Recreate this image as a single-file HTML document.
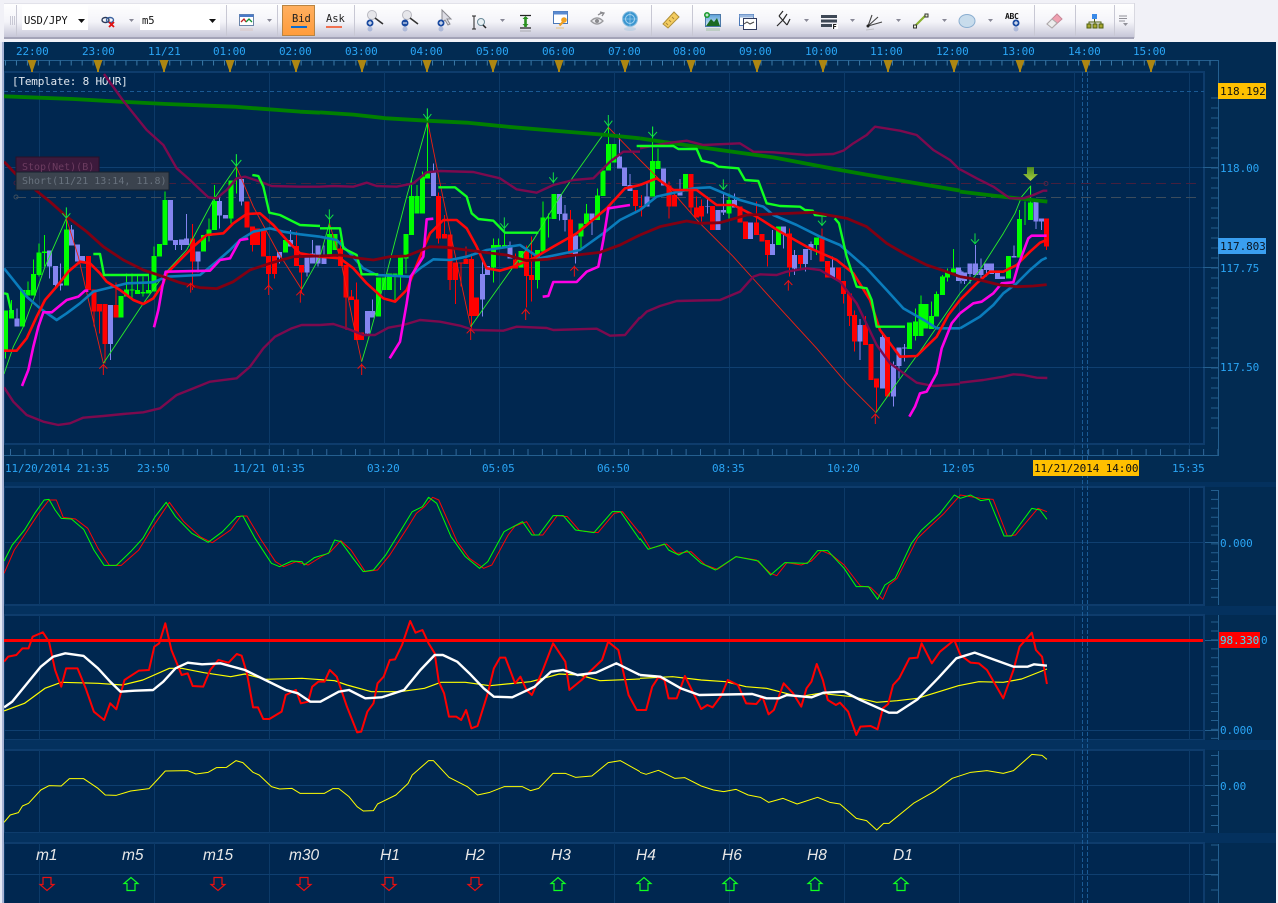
<!DOCTYPE html>
<html><head><meta charset="utf-8"><title>USD/JPY m5</title>
<style>
html,body{margin:0;padding:0;background:#f1f1f7;width:1278px;height:903px;overflow:hidden}
svg{display:block;position:absolute;left:0;top:0}
text{font-family:"DejaVu Sans Mono","Liberation Mono",monospace;font-size:11px;letter-spacing:-.1px}
.c path{fill:none;vector-effect:non-scaling-stroke;stroke-linejoin:round}
.w path{stroke-width:1;shape-rendering:crispEdges}
.b path{stroke-width:5;shape-rendering:crispEdges}
.g{stroke:#00ff00}.r{stroke:#ff0000}.v{stroke:#8484f0}
.bb{stroke:#7c0a4e;stroke-width:2.4}.mid{stroke:#820012;stroke-width:2.8}.ma{stroke:#0a7cbc;stroke-width:2.6}
.rd{stroke:#ff0808;stroke-width:2.6}.mg{stroke:#ff00e6;stroke-width:2.6}.sg{stroke:#10ff20;stroke-width:2.4}
.dg{stroke:#008000;stroke-width:3.800}.tg{stroke:#28f028;stroke-width:.9}.tr{stroke:#f02010;stroke-width:.9}
.ag{stroke:#10e040;stroke-width:1}.ar{stroke:#f01010;stroke-width:1}
.tl{fill:#2aa5f5}
.it{font-family:"Liberation Sans",sans-serif;font-style:italic;font-size:15.5px;fill:#e8e8e8;letter-spacing:0}
</style></head>
<body>
<svg width="1278" height="903" viewBox="0 0 1278 903" xmlns="http://www.w3.org/2000/svg">
<defs>
<linearGradient id="tb" x1="0" y1="0" x2="0" y2="1"><stop offset="0" stop-color="#ffffff"/><stop offset=".55" stop-color="#f4f4f9"/><stop offset="1" stop-color="#c6c6d8"/></linearGradient>
<linearGradient id="orb" x1="0" y1="0" x2="0" y2="1"><stop offset="0" stop-color="#e6eef8"/><stop offset="1" stop-color="#8fb4d8"/></linearGradient>
<linearGradient id="bar" x1="0" y1="0" x2="0" y2="1"><stop offset="0" stop-color="#4d8a20"/><stop offset="1" stop-color="#a8d040"/></linearGradient>
<linearGradient id="or" x1="0" y1="0" x2="0" y2="1"><stop offset="0" stop-color="#ffb060"/><stop offset="1" stop-color="#ff9c3c"/></linearGradient>
<linearGradient id="sky" x1="0" y1="0" x2="0" y2="1"><stop offset="0" stop-color="#5aa0d8"/><stop offset="1" stop-color="#d8ecf8"/></linearGradient>
</defs>
<rect x="0" y="0" width="1278" height="42" fill="#f1f1f7"/>
<rect x="4" y="3" width="1130" height="34" fill="url(#tb)"/>
<rect x="4" y="37" width="1130" height="2" fill="#a4a4b8"/>
<rect x="4" y="3" width="1130" height="1" fill="#e2e2ea"/>
<rect x="1134" y="3" width="1" height="35" fill="#d8d8e0"/>
<g fill="#c8c8d4">
<rect x="16" y="5" width="1" height="31"/><rect x="226" y="5" width="1" height="31"/><rect x="277" y="5" width="1" height="31"/><rect x="354" y="5" width="1" height="31"/><rect x="651" y="5" width="1" height="31"/><rect x="692" y="5" width="1" height="31"/><rect x="1034" y="5" width="1" height="31"/><rect x="1075" y="5" width="1" height="31"/><rect x="1114" y="5" width="1" height="31"/>
<rect x="10" y="16" width="1" height="9"/><rect x="12" y="16" width="1" height="9"/><rect x="14" y="16" width="1" height="9"/>
</g>
<rect x="22" y="5" width="66" height="25" fill="#fff"/><rect x="140" y="5" width="80" height="25" fill="#fff"/>
<text x="24" y="24" fill="#111" style="font-size:10.5px">USD/JPY</text>
<text x="142" y="24" fill="#111" style="font-size:10.5px">m5</text>
<path d="M78 19h7l-3.500 4z M209 19h7l-3.500 4z" fill="#111"/>
<rect x="282.500" y="5.500" width="32" height="30" fill="url(#or)" stroke="#b88442"/>
<text x="292" y="22" fill="#222" style="font-size:10.5px">Bid</text><rect x="291" y="26" width="16" height="2" fill="#0a6ad0"/>
<text x="326" y="22" fill="#222" style="font-size:10.5px">Ask</text><rect x="326" y="26" width="16" height="2" fill="#f07050"/>
<!-- dropdown arrows -->
<path d="M129 19h5l-2.500 3z M267 19h5l-2.500 3z M500 19h5l-2.500 3z M804 19h5l-2.500 3z M850 19h5l-2.500 3z M896 19h5l-2.500 3z M942 19h5l-2.500 3z M988 19h5l-2.500 3z" fill="#888896"/>
<!-- link icon -->
<g fill="none" stroke-width="1.400"><ellipse cx="105.500" cy="20" rx="3.500" ry="2.500" stroke="#2a3a5a"/><ellipse cx="110" cy="20" rx="3.500" ry="2.500" stroke="#3a62a0"/></g><path d="M109 22l5 5M114 22l-5 5" stroke="#e01010" stroke-width="1.800"/>
<!-- chart window -->
<rect x="239.500" y="14.500" width="14" height="11" fill="#fff" stroke="#6a84a8"/><rect x="239.500" y="14.500" width="14" height="2.500" fill="#4a7ac8"/><path d="M241 22l3-3 2 3" fill="none" stroke="#c02020" stroke-width="1.300"/><path d="M246 22l3-3 3 3" fill="none" stroke="#109030" stroke-width="1.300"/><rect x="240" y="28" width="13" height="3" fill="#d8c8c8" opacity=".6"/>
<!-- magnifiers -->
<g><circle cx="372" cy="15" r="4.500" fill="#e6e6ea" stroke="#b8b8c0"/><circle cx="407" cy="15" r="4.500" fill="#e6e6ea" stroke="#b8b8c0"/><path d="M375 18l8 6M410 18l8 6" stroke="#333" stroke-width="1.600"/></g>
<path d="M442 10v13l3-3 3 5 2-1-3-5h4z" fill="#dcdce4" stroke="#8a8a90"/>
<circle cx="370" cy="23" r="3.500" fill="#1a4aa0"/><circle cx="405" cy="23" r="3.500" fill="#1a4aa0"/><circle cx="441" cy="23" r="3.500" fill="#1a4aa0"/><path d="M368 23h4M370 21v4M403 23h4M439 23h4M441 21v4" stroke="#fff"/>
<g opacity=".35"><circle cx="370" cy="29" r="2.500" fill="#5a7ac0"/><circle cx="405" cy="29" r="2.500" fill="#5a7ac0"/><circle cx="441" cy="29" r="2.500" fill="#5a7ac0"/></g>
<g fill="none" stroke="#222"><path d="M474 16v13M472 16h4M472 29h4"/><circle cx="481" cy="22" r="3.500" stroke="#6a8a98" fill="#e8f0f4"/><path d="M483 25l3 3" stroke-width="1.500"/></g>
<path d="M520 15.500h11M520 28h11" stroke="#222" stroke-width="1.300"/><path d="M525.500 17v10" stroke="#2a9020" stroke-width="2.600"/><path d="M522.500 19l3-3 3 3M522.500 24l3 3 3-3" fill="#2a9020"/><rect x="520" y="30" width="11" height="2" fill="#b0b0b8" opacity=".6"/>
<rect x="553.500" y="11.500" width="14" height="12" fill="#fff" stroke="#4a78b8"/><rect x="553.500" y="11.500" width="14" height="3" fill="#5a8ad0"/><circle cx="564" cy="20" r="2.800" fill="#f0a020"/><path d="M563 22l-3.500 3.500" stroke="#f0a020" stroke-width="2.200"/><path d="M556 28h8" stroke="#e8c890" stroke-width="2" opacity=".6"/>
<path d="M591 21q6-6 12 0q-6 6-12 0z" fill="#e8e8ec" stroke="#9a9a9e" stroke-width="1.300"/><circle cx="597" cy="21" r="2" fill="#8a8a8e"/><path d="M598 15q3-2 5-2M600 12l4 1-2 3" stroke="#8a8a8e" stroke-width="1.300" fill="none"/>
<circle cx="630" cy="19" r="7.500" fill="#3a96d0" stroke="#90c0e0"/><circle cx="630" cy="19" r="4.500" fill="none" stroke="#a8d4f0"/><path d="M630 12v14M623 19h14" stroke="#a8d4f0" stroke-width=".6"/><ellipse cx="630" cy="29" rx="6" ry="2" fill="#a8c8e0" opacity=".5"/>
<!-- ruler -->
<path d="M663 24l11-12 5 5-11 11z" fill="#f4cc60" stroke="#b09038"/><path d="M666 23l2 2M669 20l2 2M672 17l2 2" stroke="#a88838"/>
<!-- picture -->
<rect x="705.500" y="14.500" width="15" height="12" fill="url(#sky)" stroke="#4a78a8"/><path d="M706 26l5-7 3 3 3-4 3 8z" fill="#1a6a20"/><rect x="706" y="28" width="14" height="3" fill="#a0c0a0" opacity=".5"/><circle cx="707" cy="15" r="3" fill="#1a9a30"/><path d="M705.500 15h3M707 13.500v3" stroke="#fff"/>
<!-- window -->
<rect x="739.500" y="14.500" width="14" height="11" fill="#fff" stroke="#4a78b8"/><rect x="739.500" y="14.500" width="14" height="3" fill="#9ab8e0"/><rect x="743.500" y="18.500" width="13" height="11" fill="#fff" stroke="#303c60"/><path d="M744 24l3-2 3 2 4-2" stroke="#444" fill="none"/>
<!-- fork -->
<path d="M777 26l6-6M779 16l8 9M779 16l4-5M783 20l4-6M787 25l3-6" fill="none" stroke="#2a2a2a" stroke-width="1.200"/>
<!-- list -->
<g fill="#3e4856"><rect x="821" y="15" width="16" height="3"/><rect x="821" y="19.500" width="16" height="3"/><rect x="821" y="24" width="11" height="3"/></g><rect x="832" y="24" width="6" height="5" fill="#fff"/><text x="832.500" y="29" fill="#000" style="font-size:7px;font-weight:bold;letter-spacing:0">F</text>
<!-- fan -->
<path d="M868 26l4-11M868 26l10-9M868 26l14-4" fill="none" stroke="#444" stroke-width="1.100"/><circle cx="868" cy="26" r="1.500" fill="#222"/><path d="M866 30l8-1" stroke="#aaa" opacity=".6"/>
<!-- line -->
<path d="M915 26l11-11" stroke="#8ab030" stroke-width="2.200"/><rect x="913.500" y="25" width="3" height="3" fill="#e8f0d0" stroke="#333"/><rect x="925" y="14" width="3" height="3" fill="#e8f0d0" stroke="#333"/>
<!-- ellipse -->
<ellipse cx="967" cy="21" rx="8" ry="6.500" fill="#c8dcec" stroke="#8aaed0"/>
<!-- ABC -->
<text x="1005" y="19" fill="#111" style="font-size:8px;font-weight:bold;letter-spacing:-.3px">ABC</text><circle cx="1016" cy="23" r="3.500" fill="#1a4aa0"/><path d="M1014 23h4M1016 21v4" stroke="#fff"/><circle cx="1016" cy="29" r="2.500" fill="#5a7ac0" opacity=".35"/>
<!-- eraser -->
<path d="M1047 24l10-10 5 5-10 9z" fill="#f0a0b0" stroke="#c88898"/><path d="M1047 24l5-5 5 4-5 5z" fill="#ececec" stroke="#aaa"/>
<!-- tree -->
<rect x="1092" y="14" width="5" height="5" fill="#3a8ae8"/><path d="M1094.500 19v3M1089 24v-2h12v2M1095 22v2" fill="none" stroke="#506010"/><g fill="#a8a830" stroke="#506010"><rect x="1087" y="24" width="4" height="4"/><rect x="1093" y="24" width="4" height="4"/><rect x="1099" y="24" width="4" height="4"/></g>
<!-- grey list -->
<path d="M1119 16h8M1119 18.500h8M1119 21h6" stroke="#909098" stroke-width="1.100"/><path d="M1123 23h5l-2.500 3z" fill="#909098"/>

<!-- dark body -->
<rect x="4" y="42" width="1272" height="861" fill="#022b52"/>
<rect x="4" y="72" width="1200" height="372" fill="#002750" stroke="#0e3c6c" stroke-width="2"/>
<rect x="4" y="482" width="1272" height="5" fill="#04315e"/>
<rect x="4" y="487" width="1200" height="118" fill="#002750" stroke="#0e3c6c" stroke-width="2"/>
<rect x="4" y="606" width="1272" height="9" fill="#04315e"/>
<rect x="4" y="615" width="1200" height="125" fill="#002750" stroke="#0e3c6c" stroke-width="2"/>
<rect x="4" y="740" width="1272" height="10" fill="#04315e"/>
<rect x="4" y="750" width="1200" height="83" fill="#002750" stroke="#0e3c6c" stroke-width="2"/>
<rect x="4" y="833" width="1272" height="10" fill="#04315e"/>
<rect x="4" y="843" width="1200" height="62" fill="#002750" stroke="#0e3c6c" stroke-width="2"/>

<!-- grid -->
<path d="M39.500 72V443M154.500 72V443M269.500 72V443M384.500 72V443M499.500 72V443M614.500 72V443M729.500 72V443M844.500 72V443M959.500 72V443M1074.500 72V455M1189.500 72V455M269.500 443V455M39.500 487V605M154.500 487V605M269.500 487V605M384.500 487V605M499.500 487V605M614.500 487V605M729.500 487V605M844.500 487V605M959.500 487V605M1074.500 487V605M1189.500 487V605M39.500 615V740M154.500 615V740M269.500 615V740M384.500 615V740M499.500 615V740M614.500 615V740M729.500 615V740M844.500 615V740M959.500 615V740M1074.500 615V740M1189.500 615V740M39.500 750V833M154.500 750V833M269.500 750V833M384.500 750V833M499.500 750V833M614.500 750V833M729.500 750V833M844.500 750V833M959.500 750V833M1074.500 750V833M1189.500 750V833M39.500 843V903M154.500 843V903M269.500 843V903M384.500 843V903M499.500 843V903M614.500 843V903M729.500 843V903M844.500 843V903M959.500 843V903M1074.500 843V903M1189.500 843V903" stroke="#0c3a68" fill="none"/>
<path d="M4 167.500H1204M4 267.500H1204M4 367.500H1204M4 542.500H1204M4 730.500H1204M4 785.500H1204M4 874.500H1204" stroke="#0f3f70" fill="none"/>
<path d="M1082.500 72V903M1087.500 72V903" stroke="#1a5a94" stroke-dasharray="4 2" fill="none"/>
<path d="M4 91.500H1204" stroke="#1a5a94" stroke-dasharray="4 3" fill="none"/>
<path d="M16 183.500H1200" stroke="#45203e" stroke-dasharray="10 5" fill="none"/>
<path d="M16 197.500H1200" stroke="#3c4c5c" stroke-dasharray="10 5" fill="none"/>
<circle cx="16" cy="183" r="2" fill="none" stroke="#45203e"/><circle cx="16" cy="197" r="2" fill="none" stroke="#3c4c5c"/><circle cx="1046" cy="183.500" r="2" fill="none" stroke="#5a2444"/>

<!-- rulers & axes -->
<path d="M4 60.500H1218.500V455.500H4" stroke="#245f8f" fill="none"/>
<path d="M5 63H1218" stroke="#3a7aa8" stroke-width="5" stroke-dasharray="1 9.950" fill="none"/>
<path d="M10 452H1218" stroke="#30689a" stroke-width="6" stroke-dasharray="1 13.375" fill="none"/>
<path d="M1214.500 97.500V436" stroke="#245f8f" stroke-width="7" stroke-dasharray="1 9" fill="none"/>
<path d="M1203 167.500H1218M1203 267.500H1218M1203 367.500H1218" stroke="#245f8f" fill="none"/>
<path d="M1218.500 490V605M1218.500 615V740M1218.500 751V833M1218.500 844V903" stroke="#245f8f" fill="none"/>
<path d="M1214.500 490V605" stroke="#245f8f" stroke-width="7" stroke-dasharray="1 7.900" fill="none"/>
<path d="M1214.500 621.500V740" stroke="#245f8f" stroke-width="7" stroke-dasharray="1 7.950" fill="none"/>
<path d="M1214.500 755V833" stroke="#245f8f" stroke-width="7" stroke-dasharray="1 9" fill="none"/>
<path d="M1214.500 844.500V903" stroke="#245f8f" stroke-width="7" stroke-dasharray="1 14" fill="none"/>
<path d="M1205 542.500H1218M1205 640.500H1218M1205 730.500H1218M1205 785.500H1218M1205 874.500H1218" stroke="#245f8f" fill="none"/>
<!-- gold triangles -->
<path id="tri" d="M27.500 60h9l-3.500 10v2h-2v-2z M93.500 60h9l-3.500 10v2h-2v-2z M159.500 60h9l-3.500 10v2h-2v-2z M225.500 60h9l-3.500 10v2h-2v-2z M291.500 60h9l-3.500 10v2h-2v-2z M357.500 60h9l-3.500 10v2h-2v-2z M422.500 60h9l-3.500 10v2h-2v-2z M488.500 60h9l-3.500 10v2h-2v-2z M554.500 60h9l-3.500 10v2h-2v-2z M620.500 60h9l-3.500 10v2h-2v-2z M686.500 60h9l-3.500 10v2h-2v-2z M752.500 60h9l-3.500 10v2h-2v-2z M818.500 60h9l-3.500 10v2h-2v-2z M883.500 60h9l-3.500 10v2h-2v-2z M949.500 60h9l-3.500 10v2h-2v-2z M1015.500 60h9l-3.500 10v2h-2v-2z M1081.500 60h9l-3.500 10v2h-2v-2z M1146.500 60h9l-3.500 10v2h-2v-2z" fill="#ad8612"/>
<g class="tl">
<text x="16" y="55">22:00</text><text x="82" y="55">23:00</text><text x="148" y="55">11/21</text><text x="213" y="55">01:00</text><text x="279" y="55">02:00</text><text x="345" y="55">03:00</text><text x="410" y="55">04:00</text><text x="476" y="55">05:00</text><text x="542" y="55">06:00</text><text x="608" y="55">07:00</text><text x="673" y="55">08:00</text><text x="739" y="55">09:00</text><text x="805" y="55">10:00</text><text x="870" y="55">11:00</text><text x="936" y="55">12:00</text><text x="1002" y="55">13:00</text><text x="1068" y="55">14:00</text><text x="1133" y="55">15:00</text>
<text x="5" y="472">11/20/2014 21:35</text><text x="137" y="472">23:50</text><text x="233" y="472">11/21 01:35</text><text x="367" y="472">03:20</text><text x="482" y="472">05:05</text><text x="597" y="472">06:50</text><text x="712" y="472">08:35</text><text x="827" y="472">10:20</text><text x="942" y="472">12:05</text><text x="1172" y="472">15:35</text>
<text x="1220" y="172">118.00</text><text x="1220" y="272">117.75</text><text x="1220" y="371">117.50</text>
<text x="1220" y="547">0.000</text><text x="1220" y="734">0.000</text><text x="1220" y="790">0.00</text>
</g>
<text x="12" y="85" fill="#dfe6ee" style="letter-spacing:-.2px">[Template: 8 HOUR]</text>

<!-- CANDLES -->
<g class="c">
<g transform="translate(0 100) scale(.33333)">
<g class="w"><path class="g" d="M17 632V775M35 600V655M67 570V680M84 545V587M100 478V587M117 430V530M133 405V500M199 322V557M363 588V653M379 520V590M396 520V600M412 525V582M429 530V590M445 525V580M462 440V575M478 432V470M495 275V435M610 405V455M627 355V425M643 255V390M693 242V370M709 165V280"/>
<path class="v" d="M51 625V680M149 452V535M166 498V560M182 490V572M215 375V437M232 434V485M248 468V485M331 615V780M511 300V422M527 420V450M544 418V450M560 342V435M594 454V518M659 290V385M676 345V356M724 237V317M839 456V490M872 390V440M921 472V530M937 420V490M954 437V500"/>
<path class="r" d="M265 468V570M282 568V680M298 612V700M315 612V790M348 547V653M577 372V570M741 305V383M757 380V455M773 386V435M790 388V470M806 468V555M823 468V535M889 395V498M905 495V580"/></g>
<g class="b"><path class="g" d="M17 632V750M35 630V655M67 570V680M84 570V587M100 522V587M117 457V525M133 455V459M199 388V557M363 588V653M379 568V590M396 568V572M412 570V582M429 576V580M445 570V580M462 468V575M478 432V470M495 300V435M610 405V455M627 388V408M643 303V390M693 242V356M856 420V458"/>
<path class="v" d="M51 655V680M149 452V500M166 498V555M182 550V556M215 388V437M232 434V485M248 468V485M331 615V732M511 300V422M527 420V435M544 418V435M560 415V435M594 454V485M659 303V347M676 345V356M724 237V305M839 456V472M872 420V440M921 472V518M937 460V490M954 437V490"/>
<path class="r" d="M265 468V570M282 568V635M298 612V635M315 612V732M348 615V653M577 415V485M741 305V383M757 380V435M773 386V435M790 388V470M806 468V522M823 468V522M889 438V498M905 495V518"/></g>
</g>
<g transform="translate(320 100) scale(.33333)">
<g class="w"><path class="g" d="M28 360V470M45 402V450M175 533V650M192 533V570M208 520V570M225 520V605M241 473V570M258 402V520M274 240V405M291 255V340M307 215V340M323 25V235M520 415V548M536 415V443M553 400V443M603 453V502M652 450V565M669 305V455M685 340V412M702 282V357M783 370V450M799 312V372M832 265V360M849 212V288M865 80V212M882 132V187"/>
<path class="v" d="M12 437V492M142 633V705M158 598V652M340 190V288M487 485V650M503 498V525M570 425V475M718 282V362M735 315V395M767 407V490M816 340V405M898 100V205M914 202V258M930 222V273"/>
<path class="r" d="M62 420V498M78 495V690M94 570V600M109 548V720M125 698V720M356 278V430M373 345V415M390 403V570M406 487V612M423 487V560M438 440V492M454 460V685M470 593V648M586 460V505M619 437V622M635 410V605M751 330V462M947 270V335"/></g>
<g class="b"><path class="g" d="M28 402V470M45 402V450M175 533V650M192 533V570M208 520V570M225 520V530M241 473V530M258 402V475M274 288V405M291 288V340M307 230V340M323 220V235M520 435V502M536 435V443M553 435V443M603 453V502M652 450V540M669 352V455M685 352V356M702 282V357M783 370V410M799 340V372M832 287V360M849 212V288M865 132V212M882 132V187"/>
<path class="v" d="M12 472V492M142 633V700M158 633V652M340 218V288M487 522V598M503 498V525M570 435V475M718 282V342M735 340V360M767 407V462M816 340V360M898 170V205M914 202V258M930 255V273"/>
<path class="r" d="M62 445V498M78 495V592M94 590V600M109 598V720M125 698V720M356 288V415M373 402V415M390 403V540M406 487V540M423 487V490M438 477V492M454 477V648M470 593V648M586 478V505M619 455V528M635 525V540M751 358V462M947 270V318"/></g>
</g>
<g transform="translate(640 100) scale(.33333)">
<g class="w"><path class="g" d="M38 80V290M54 145V207M136 222V275M267 280V355M415 380V435M529 412V465M809 667V747M826 625V722M843 587V708M858 612V685M874 605V687M890 575V650M907 525V585M923 505V545M940 447V517"/>
<path class="v" d="M21 250V320M70 205V257M120 237V287M202 290V340M234 330V390M251 280V345M284 280V323M332 368V417M398 390V465M431 380V445M464 450V525M497 447V515M513 425V480M578 470V533M660 657V780M727 700V865M760 785V920M777 743V835M793 732V785M956 503V543"/>
<path class="r" d="M4 285V350M87 245V355M103 285V320M153 222V340M169 290V352M185 298V365M218 318V390M300 320V368M316 365V417M349 305V405M366 402V425M382 420V500M448 385V530M481 465V510M546 385V485M562 483V533M595 503V543M611 543V610M628 580V678M644 632V755M677 648V735M693 732V840M710 836V935M743 711V890"/></g>
<g class="b"><path class="g" d="M38 183V290M54 183V207M136 222V275M267 300V340M415 380V435M529 412V435M809 667V747M826 665V708M843 612V708M858 612V685M874 648V687M890 582V650M907 530V585M923 518V532M940 505V517"/>
<path class="v" d="M21 290V320M70 205V257M120 273V287M202 318V320M234 330V390M251 330V338M284 300V323M332 368V417M398 432V465M431 380V402M464 465V505M497 447V492M513 432V450M578 503V533M660 675V725M727 711V865M760 795V890M777 743V798M793 743V746M956 503V543"/>
<path class="r" d="M4 318V322M87 257V320M103 285V320M153 222V322M169 322V352M185 318V350M218 318V390M300 320V368M316 365V417M349 368V405M366 402V425M382 420V465M448 400V503M481 465V492M546 410V485M562 483V533M595 503V543M611 543V582M628 580V648M644 645V725M677 675V735M693 732V840M710 836V863M743 711V890"/></g>
</g>
<g transform="translate(960 80) scale(.33333)">
<g class="w"><path class="v" d="M3 570V610M14 577V612M30 550V610M46 495V585M63 535V597M79 550V590M95 550V582M112 578V597M128 590V597M162 497V532M228 366V447M244 415V450"/>
<path class="g" d="M145 528V595M178 390V533M195 365V435M211 318V420"/><path class="r" d="M259 415V510"/></g>
<g class="b"><path class="v" d="M3 575V600M14 577V603M30 550V582M46 550V585M63 567V585M79 550V570M95 550V582M112 578V597M128 590V597M162 528V532M228 366V425M244 415V425"/>
<path class="g" d="M145 528V595M178 417V533M211 367V420"/><path class="r" d="M259 415V500"/></g>
</g>
<!-- LINES -->
<g transform="translate(0 100) scale(.33333)">
<path class="tg" d="M12 822 40 740 70 680 100 600 135 500 199 355"/><path class="tr" d="M199 355 235 470 270 620 310 790"/><path class="tg" d="M310 790 430 610 495 520 560 450 640 300 709 200"/><path class="tr" d="M709 200 760 320 830 450 905 568"/><path class="tg" d="M905 568 960 470"/>
<path class="dg" d="M12 -11 220 -3 360 5 500 12 700 20 900 35 960 38"/>
<path class="bb" d="M312 -78 368 0 400 40 440 90 490 135 530 205 570 240 625 292 650 295 680 270 710 235 735 230 780 245 815 258 900 260 960 260"/>
<path class="bb" d="M12 862 40 905 80 945 130 965 175 975 210 970 250 953 310 948 370 942 430 937 480 925 530 885 580 865 630 845 710 835 750 800 790 745 825 710 875 685 905 675 960 675"/>
<path class="ma" d="M12 505 40 540 80 590 120 625 170 660 200 640 240 610 280 575 320 565 380 550 460 547 500 530 600 525 650 485 690 450 720 420 760 395 810 385 850 395 900 403 960 410"/>
<path class="rd" d="M12 752 50 752 80 715 110 650 135 600 170 560 205 515 240 485 270 490 300 520 320 545 360 570 400 600 430 612 460 595 490 550 500 520 540 480 580 440 620 405 670 400 700 370 740 342 780 340 820 375 860 420 900 460 960 470"/>
<path class="mg" d="M66 858 85 810 100 740 115 680 130 637 155 637 200 600 235 590 255 572 265 572"/>
<path class="mg" d="M462 682 475 630 487 560 497 515 630 512 660 480 690 475 720 420 745 416"/>
<path class="sg" d="M12 580 22 582 35 640"/><path class="sg" d="M280 462 300 462 312 525 447 525"/><path class="sg" d="M757 225 775 228 790 260 808 338 840 345 880 365 900 375 960 378"/>
<path class="mid" d="M12 185 50 225 100 265 150 305 200 350 260 395 310 440 370 480 430 510 490 530 540 548 600 563 650 566 700 545 750 510 810 490 880 470 960 468"/>
<path class="ag" d="M199 322V354M187 340 199 354 211 340M709 162V200M694 180 709 198 724 180"/><path class="ar" d="M310 792V825M298 806 310 794 322 806M572 548V578M560 562 572 550 584 562M806 553V585M794 569 806 556 818 569M901 570V608M889 586 901 574 913 586"/>
</g>
<g transform="translate(320 100) scale(.33333)">
<path class="tg" d="M-0 470 28 370"/><path class="tr" d="M28 370 62 480 100 670 125 785"/><path class="tg" d="M125 785 150 700 200 520 260 290 323 65"/><path class="tr" d="M323 65 360 250 400 440 452 680"/><path class="tg" d="M452 680 580 500 640 420 720 290 760 230 865 82"/><path class="tr" d="M865 82 960 180"/>
<path class="dg" d="M0 37 100 44 200 55 320 62 440 68 560 80 700 92 860 105 960 115"/>
<path class="bb" d="M0 260 40 258 100 260 140 248 170 258 230 260 280 250 320 217 360 213 460 216 540 235 590 268 650 278 700 255 760 240 820 235 870 185 910 155 960 155"/>
<path class="bb" d="M0 675 40 672 80 685 130 705 165 705 205 683 250 675 300 660 360 665 420 677 460 690 550 692 590 680 680 684 700 690 830 686 870 707 915 705 960 652"/>
<path class="ma" d="M0 410 50 420 90 460 130 505 170 525 270 530 300 505 340 478 390 480 440 470 500 450 600 435 660 475 780 450 850 400 900 360 950 335 960 330"/>
<path class="rd" d="M0 470 60 475 100 505 140 550 190 595 225 605 260 570 300 470 330 400 370 360 410 360 440 385 470 440 500 505 540 512 580 500 640 475 700 440 770 400 860 325 915 265 960 255"/>
<path class="mg" d="M209 775 240 725 260 610 272 530 310 470 320 358 340 356"/>
<path class="mg" d="M668 590 685 588 700 546 770 546 800 515 835 500 850 420 865 325 930 315"/>
<path class="sg" d="M0 385 60 385 70 445 110 465 125 523 175 523"/><path class="sg" d="M355 262 405 262 440 290 455 340 475 357 520 362 555 398 655 398"/><path class="sg" d="M950 138 960 138"/>
<path class="mid" d="M0 468 60 465 120 475 160 480 210 470 260 468 330 440 380 442 440 450 500 458 560 465 620 482 680 478 760 466 840 457 900 435 960 405"/>
<path class="ag" d="M28 328V360M16 344 28 358 40 344M322 25V62M310 42 322 58 334 42M553 352V398M541 370 553 385 565 370M700 217V250M688 232 700 247 712 232M865 45V82M853 62 865 78 877 62"/><path class="ar" d="M125 790V825M113 806 125 794 137 806M452 685V720M440 700 452 688 464 700M617 625V660M605 642 617 628 629 642M763 497V530M751 512 763 500 775 512"/>
</g>
<g transform="translate(640 100) scale(.33333)">
<path class="tr" d="M0 180 110 290 180 370 280 470 420 625 530 745 620 850 708 938"/><path class="tg" d="M708 938 770 850 850 740 960 580"/>
<path class="dg" d="M0 115 100 130 240 150 400 172 600 210 800 245 960 272"/>
<path class="bb" d="M0 145 50 135 100 127 140 122 190 135 300 130 340 155 400 157 500 165 580 162 610 152 640 130 680 105 705 80 780 92 830 105 880 150 930 180 960 210"/>
<path class="bb" d="M0 655 20 635 60 618 110 603 240 600 300 575 340 530 360 523 410 525 440 515 500 505 540 510 600 545 650 610 710 735 750 790 830 848 880 858 960 852"/>
<path class="ma" d="M0 330 50 290 160 265 210 262 300 300 370 320 400 345 470 375 540 410 600 435 680 505 740 570 790 625 860 665 890 685 960 685"/>
<path class="rd" d="M0 255 50 235 100 270 170 270 230 315 280 315 350 350 420 395 500 440 590 480 640 520 690 600 720 690 780 770 830 768 890 710 925 645 960 600"/>
<path class="mg" d="M808 950 825 920 840 880 860 875 890 820 905 745 935 670 960 640"/>
<path class="sg" d="M0 138 100 138 115 147 170 147 185 182 220 190 235 200 295 205 315 240 355 243 380 310 420 318 480 320 495 330 518 332 525 345 560 347"/><path class="sg" d="M584 355 597 370 620 470 650 560 680 565 695 600 710 680 795 680"/>
<path class="mid" d="M0 405 60 380 140 363 180 370 240 368 320 345 400 342 520 337 620 355 680 380 740 430 800 465 860 495 920 515 960 530"/>
<path class="ag" d="M38 80V112M25 96 38 110 51 96M250 238V270M238 254 250 268 262 254M546 348V378M534 362 546 376 558 362"/><path class="ar" d="M445 540V572M433 555 445 542 457 555M706 940V972M694 955 706 942 718 955"/>
</g>
<g transform="translate(960 80) scale(.33333)">
<path class="tg" d="M0 640 60 570 130 460 165 400 185 350 212 318 212 365"/>
<path class="dg" d="M0 335 100 347 180 356 262 365"/>
<path class="bb" d="M0 268 50 295 100 320 150 355 190 355 220 345 250 332 262 332"/>
<path class="bb" d="M0 908 70 900 130 890 160 883 190 885 230 893 262 894"/>
<path class="ma" d="M0 745 60 710 100 675 130 640 170 610 210 570 245 540 260 533"/>
<path class="rd" d="M0 660 50 610 90 575 130 575 170 555 210 515 240 488 260 480"/>
<path class="mg" d="M0 700 40 670 65 665 100 640 125 610 160 607 175 555 205 475 215 467 260 467"/>
<path class="mid" d="M0 590 60 600 120 615 170 620 220 618 260 614"/>
<path class="ag" d="M45 460V493M33 478 45 491 57 478"/>
</g>
<!-- SUB 1 -->
<g transform="translate(0 480) scale(.40816 .33333)">
<path stroke="#ff0000" stroke-width="1" d="M10 280 35 210 60 165 95 100 120 60 138 60 155 112 185 117 215 145 240 205 268 256 297 256 340 210 375 140 415 67 450 125 490 170 520 188 565 150 590 108 605 108 640 180 675 245 695 260 725 245 755 255 790 228 810 215 835 182 860 210 895 275 925 270 955 225 1000 140 1020 100 1040 80 1060 52 1075 60 1120 185 1150 235 1185 265 1205 255 1245 165 1262 138 1290 125 1310 165 1330 165 1365 107 1390 110 1420 152 1465 158 1505 100 1525 95 1568 160"/>
<path stroke="#00ff00" stroke-width="1" d="M10 243 30 195 60 150 85 100 108 60 120 58 135 90 150 115 175 117 205 148 230 210 255 256 285 256 320 215 350 175 380 110 407 67 430 110 470 160 510 187 545 155 580 110 595 108 625 175 665 250 685 260 715 243 740 245 745 255 770 233 805 220 820 180 835 185 865 235 890 275 915 270 945 225 985 145 1010 95 1035 80 1050 52 1070 70 1105 170 1140 230 1175 265 1195 245 1235 155 1280 125 1303 165 1320 165 1355 107 1380 107 1410 150 1455 158 1500 95 1520 95 1568 180"/>
</g>
<g transform="translate(640 480) scale(.40816 .33333)">
<path stroke="#ff0000" stroke-width="1" d="M0 155 25 205 65 192 90 220 125 215 160 255 190 268 235 230 285 240 320 280 335 287 360 248 395 255 420 243 445 212 470 225 500 255 540 318 565 322 595 358 610 315 630 295 680 175 710 140 745 100 785 45 835 55 865 58 900 168 920 165 975 85 997 95"/>
<path stroke="#00ff00" stroke-width="1" d="M0 175 20 208 60 192 70 210 95 225 115 212 150 250 185 270 235 230 290 243 320 285 355 248 410 250 435 212 460 212 500 265 530 320 560 320 582 358 600 315 625 295 665 190 690 150 735 100 770 45 785 55 810 45 835 62 855 58 892 168 910 168 960 85 980 90 997 118"/>
</g>
<!-- SUB 2 -->
<g transform="translate(0 480) scale(.40816 .33333)">
<path stroke="#ffff00" stroke-width="1.200" d="M10 693 60 670 110 625 150 607 240 610 300 615 350 600 415 565 445 565 500 578 565 590 600 582 650 598 740 595 820 602 850 615 910 635 980 635 1040 625 1080 607 1140 607 1200 617 1300 605 1370 582 1420 585 1470 602 1568 597"/>
<path stroke="#ff0000" stroke-width="2" d="M10 545 20 530 40 525 55 505 70 505 80 470 105 457 120 485 135 570 150 620 162 565 190 565 210 625 230 695 255 720 270 670 285 688 305 600 340 572 365 570 378 500 390 490 405 430 420 510 445 585 460 580 472 618 498 620 515 570 535 540 560 548 580 522 592 527 605 580 620 682 632 682 645 717 660 717 690 695 700 645 725 630 737 670 755 665 765 620 780 605 795 605 808 570 825 590 850 680 875 757 885 755 900 695 915 670 925 610 940 590 955 540 968 538 985 495 1005 423 1018 458 1035 450 1050 490 1065 520 1075 605 1088 640 1100 710 1118 710 1130 720 1142 690 1155 745 1170 738 1195 640 1210 565 1225 533 1238 533 1262 610 1275 590 1290 630 1303 645 1330 570 1355 490 1385 545 1395 630 1425 600 1445 575 1475 540 1490 485 1515 510 1540 645 1560 690 1568 690"/>
<path stroke="#ffffff" stroke-width="2.400" d="M10 682 30 665 60 620 100 560 130 530 160 520 205 528 240 565 270 605 295 635 330 632 375 630 400 605 430 565 460 548 495 553 540 550 600 570 650 600 700 630 730 640 760 665 785 665 830 635 855 630 895 655 935 652 990 630 1030 570 1065 525 1085 525 1120 545 1150 580 1185 625 1210 650 1255 652 1310 620 1350 575 1380 570 1415 585 1460 578 1510 550 1568 585"/>
</g>
<g transform="translate(640 480) scale(.40816 .33333)">
<path stroke="#ffff00" stroke-width="1.200" d="M0 595 80 590 150 600 210 605 260 620 310 625 390 650 440 640 520 650 580 667 630 662 680 655 780 617 830 605 890 607 935 597 997 567"/>
<path stroke="#ff0000" stroke-width="2" d="M0 690 15 690 30 620 45 592 60 600 70 655 90 655 110 588 150 687 165 675 178 682 200 645 215 600 240 615 260 670 285 672 300 650 315 703 328 690 352 610 375 640 395 680 408 625 420 605 433 552 448 600 460 660 480 675 490 668 510 695 530 765 540 740 565 738 582 748 595 685 608 672 620 615 635 595 660 535 680 533 690 490 715 550 735 515 770 480 785 525 810 548 830 550 850 570 890 655 915 570 930 500 960 458 970 510 985 530 997 612"/>
<path stroke="#ffffff" stroke-width="2.400" d="M0 585 50 590 100 625 145 645 275 642 310 655 340 655 360 645 420 652 450 638 500 635 540 660 610 698 630 698 680 658 730 595 775 535 820 518 870 540 915 560 950 560 965 553 997 557"/>
</g>
<!-- SUB 3 -->
<g transform="translate(0 740) scale(.40816 .33333)">
<path stroke="#ffff00" stroke-width="1" d="M10 247 25 225 45 218 55 198 70 190 100 150 120 137 150 138 170 116 205 116 240 145 258 165 285 166 320 153 365 146 385 120 405 93 460 92 480 102 510 97 530 83 555 82 578 62 595 68 620 97 635 105 665 140 685 147 715 145 735 160 795 160 815 146 830 146 855 170 875 200 890 213 915 212 925 192 970 165 1000 130 1010 105 1050 62 1062 62 1100 112 1145 140 1170 165 1200 157 1235 140 1280 140 1300 152 1320 145 1355 100 1385 100 1410 112 1450 108 1490 68 1520 62 1568 95"/>
</g>
<g transform="translate(640 740) scale(.40816 .33333)">
<path stroke="#ffff00" stroke-width="1" d="M0 97 15 103 45 91 85 115 110 113 150 138 180 150 205 155 235 148 265 165 295 172 315 187 350 175 385 192 435 172 465 187 490 192 530 235 555 242 580 270 597 250 610 250 670 190 720 155 765 115 810 97 850 92 890 100 915 92 960 43 985 46 997 58"/>
</g>
</g>
<rect x="4" y="639" width="1199" height="3" fill="#ff0000"/>

<!-- big arrow -->
<path d="M1027 167h7v7h4l-7.500 7-7.500-7h4z" fill="url(#bar)"/>
<!-- order labels -->
<rect x="16" y="157" width="83" height="18" fill="#3c1a3c" stroke="#2a1028"/>
<rect x="16" y="172" width="153" height="18" fill="#3b434e" stroke="#14202e"/>
<text x="22" y="170" fill="#6c3c60" style="font-size:10px;letter-spacing:0">Stop(Net)(B)</text>
<text x="22" y="184" fill="#68727e" style="font-size:10px;letter-spacing:0">Short(11/21 13:14, 11.8)</text>
<!-- badges -->
<rect x="1218" y="83" width="48" height="16" fill="#ffc000"/><text x="1220" y="95" fill="#111">118.192</text>
<rect x="1218" y="238" width="48" height="16" fill="#3a9ff0"/><text x="1220" y="250" fill="#0a1420">117.803</text>
<rect x="1033" y="460" width="106" height="16" fill="#ffc000"/><text x="1034" y="472" fill="#111">11/21/2014 14:00</text>
<rect x="1219" y="632" width="41" height="16" fill="#ff0000"/><text x="1220" y="644" fill="#40e0f8">98.330</text><text x="1261" y="644" class="tl">0</text>
<!-- timeframe labels -->
<text class="it" x="36" y="860">m1</text><text class="it" x="122" y="860">m5</text><text class="it" x="203" y="860">m15</text><text class="it" x="289" y="860">m30</text><text class="it" x="380" y="860">H1</text><text class="it" x="465" y="860">H2</text><text class="it" x="551" y="860">H3</text><text class="it" x="636" y="860">H4</text><text class="it" x="722" y="860">H6</text><text class="it" x="807" y="860">H8</text><text class="it" x="893" y="860">D1</text>
<g fill="none" stroke="#e81010" stroke-width="1.200"><path d="M43 877.500h8v7h3l-7 6-7-6h3z"/><path d="M214 877.500h8v7h3l-7 6-7-6h3z"/><path d="M300 877.500h8v7h3l-7 6-7-6h3z"/><path d="M385 877.500h8v7h3l-7 6-7-6h3z"/><path d="M471 877.500h8v7h3l-7 6-7-6h3z"/></g>
<g fill="none" stroke="#10ff20" stroke-width="1.200"><path d="M127 890.500h8v-7h3l-7-6-7 6h3z"/><path d="M554 890.500h8v-7h3l-7-6-7 6h3z"/><path d="M640 890.500h8v-7h3l-7-6-7 6h3z"/><path d="M726 890.500h8v-7h3l-7-6-7 6h3z"/><path d="M811 890.500h8v-7h3l-7-6-7 6h3z"/><path d="M897 890.500h8v-7h3l-7-6-7 6h3z"/></g>
<!-- edges -->
<rect x="0" y="42" width="4" height="861" fill="#e6e8f4"/><rect x="2" y="42" width="2" height="861" fill="#a8b4d4"/>
<rect x="1276" y="42" width="2" height="861" fill="#f1f1f7"/>
</svg>
</body></html>
